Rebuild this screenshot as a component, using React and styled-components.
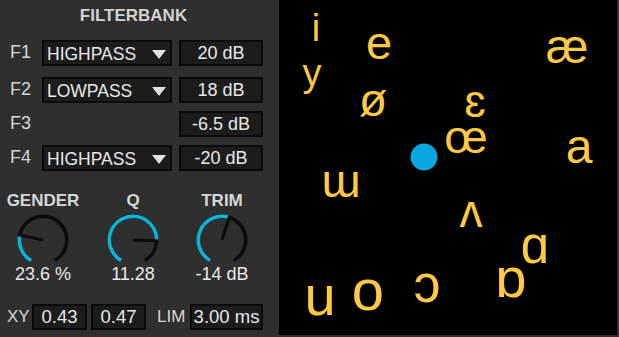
import styled, { createGlobalStyle } from "styled-components"

const GlobalStyle = createGlobalStyle`
  html, body {
    margin: 0;
    padding: 0;
    background: #2f2f2f;
  }
  body {
    font-family: "Liberation Sans", Arial, sans-serif;
  }
`

const filtros = [
    { nome: "F1", tipo: "HIGHPASS", ganho: "20 dB" },
    { nome: "F2", tipo: "LOWPASS", ganho: "18 dB" },
    { nome: "F3", tipo: null, ganho: "-6.5 dB" },
    { nome: "F4", tipo: "HIGHPASS", ganho: "-20 dB" },
]

const knobs = [
    { label: "GENDER", valor: 0.24, texto: "23.6 %" },
    { label: "Q", valor: 0.807, texto: "11.28" },
    { label: "TRIM", valor: 0.559, texto: "-14 dB" },
]

// x = centro horizontal, y = linha de base (coordenadas do pad)
const vogais = [
    { v: "i", x: 37, y: 41, s: 38 },
    { v: "e", x: 100, y: 59, s: 47 },
    { v: "æ", x: 288, y: 63, s: 48 },
    { v: "y", x: 33, y: 86, s: 38 },
    { v: "ø", x: 94, y: 116, s: 46 },
    { v: "ɛ", x: 196, y: 117, s: 47 },
    { v: "œ", x: 187, y: 153, s: 46 },
    { v: "a", x: 300, y: 163, s: 48 },
    { v: "ɯ", x: 62, y: 197, s: 47 },
    { v: "ʌ", x: 192, y: 227, s: 46 },
    { v: "ɑ", x: 256, y: 263, s: 51 },
    { v: "ɒ", x: 232, y: 297, s: 56 },
    { v: "ɔ", x: 148, y: 302, s: 54 },
    { v: "o", x: 89, y: 310, s: 58 },
    { v: "u", x: 41, y: 315, s: 56 },
]

function polar(cx, cy, r, ang) {
    const rad = (ang * Math.PI) / 180
    return [cx + r * Math.sin(rad), cy - r * Math.cos(rad)]
}

function arco(cx, cy, r, a0, a1) {
    const [x0, y0] = polar(cx, cy, r, a0)
    const [x1, y1] = polar(cx, cy, r, a1)
    const grande = a1 - a0 > 180 ? 1 : 0
    return `M ${x0} ${y0} A ${r} ${r} 0 ${grande} 1 ${x1} ${y1}`
}

function Knob({ label, valor, texto }) {
    const cx = 28
    const cy = 26
    const r = 23.7
    const fim = 210 + 300 * valor
    const [nx, ny] = polar(cx, cy, 25.5, fim)

    return (
        <KnobBox>
            <KnobLabel>{label}</KnobLabel>
            <Dial viewBox="0 0 56 50">
                <path d={arco(cx, cy, r, 210, 510)} stroke="#0c0c0c" strokeWidth="3.6" fill="none" />
                <path d={arco(cx, cy, r, 210, fim)} stroke="#0bb4d6" strokeWidth="3.6" fill="none" />
                <line x1={cx} y1={cy} x2={nx} y2={ny} stroke="#0c0c0c" strokeWidth="3.2" />
            </Dial>
            <KnobValue>{texto}</KnobValue>
        </KnobBox>
    )
}

export default function App() {
    return (
        <Window>
            <GlobalStyle />
            <Controls>
                <Title>FILTERBANK</Title>

                <FilterList>
                    {filtros.map(f => (
                        <FilterRow key={f.nome}>
                            <RowLabel>{f.nome}</RowLabel>
                            {f.tipo ? (
                                <Dropdown>
                                    <span>{f.tipo}</span>
                                    <Arrow />
                                </Dropdown>
                            ) : <span />}
                            <ValueBox>{f.ganho}</ValueBox>
                        </FilterRow>
                    ))}
                </FilterList>

                <KnobRow>
                    {knobs.map(k => <Knob key={k.label} {...k} />)}
                </KnobRow>

                <BottomRow>
                    <SmallLabel $w={25}>XY</SmallLabel>
                    <NumBox $w={55}>0.43</NumBox>
                    <NumBox $w={55} $ml={4}>0.47</NumBox>
                    <SmallLabel $w={33} $ml={11}>LIM</SmallLabel>
                    <NumBox $w={73}>3.00 ms</NumBox>
                </BottomRow>
            </Controls>

            <Pad>
                <svg width="338" height="335" viewBox="0 0 338 335">
                    {vogais.map(v => (
                        <Vowel key={v.v} x={v.x} y={v.y} fontSize={v.s} textAnchor="middle">{v.v}</Vowel>
                    ))}
                    <circle cx="145" cy="157" r="13.5" fill="#0aa6df" />
                </svg>
            </Pad>
        </Window>
    )
}

const Window = styled.div`
    width: 619px;
    height: 337px;

    display: flex;

    background: #2f2f2f;
`

const Controls = styled.div`
    width: 279px;
    box-sizing: border-box;
    padding: 6px 0 0 7px;

    display: flex;
    flex-direction: column;
`

const Title = styled.div`
    width: 253px;

    font-weight: 700;
    font-size: 17px;
    line-height: 20px;
    text-align: center;
    color: #d2d2d2;
`

const FilterList = styled.div`
    margin-top: 14px;

    display: flex;
    flex-direction: column;
    gap: 8px;
`

const FilterRow = styled.div`
    height: 26px;

    display: grid;
    grid-template-columns: 28px 130px 84px;
    column-gap: 7px;

    &:first-child {
        margin-bottom: 3px;
    }
`

const RowLabel = styled.div`
    padding-left: 3px;

    font-size: 18px;
    line-height: 24px;
    color: #d6d6d6;
`

const Caixa = styled.div`
    box-sizing: border-box;
    height: 26px;

    border: 2px solid #0a0a0a;
    background: #1c1c1c;

    font-size: 17.5px;
    color: #e8e8e8;
`

const Dropdown = styled(Caixa)`
    padding: 2px 4px 0 3px;

    display: flex;
    justify-content: space-between;
    align-items: center;
`

const Arrow = styled.div`
    width: 0;
    height: 0;

    border-left: 7px solid transparent;
    border-right: 7px solid transparent;
    border-top: 9px solid #e0e0e0;
`

const ValueBox = styled(Caixa)`
    font-size: 18px;
    line-height: 22px;
    text-align: center;
`

const KnobRow = styled.div`
    margin: 20px 0 0 -7px;

    display: grid;
    grid-template-columns: 86px 94px 84px;
`

const KnobBox = styled.div`
    display: flex;
    flex-direction: column;
    align-items: center;
`

const KnobLabel = styled.div`
    font-weight: 700;
    font-size: 17px;
    line-height: 20px;
    color: #d6d6d6;
`

const Dial = styled.svg`
    width: 56px;
    height: 50px;
    margin-top: 3px;
`

const KnobValue = styled.div`
    font-size: 18px;
    line-height: 20px;
    color: #e8e8e8;
`

const BottomRow = styled.div`
    margin-top: 20px;
    height: 26px;

    display: flex;
    align-items: center;
`

const SmallLabel = styled.div`
    width: ${props => props.$w}px;
    margin-left: ${props => props.$ml || 0}px;

    font-size: 17px;
    color: #d6d6d6;
`

const NumBox = styled(Caixa)`
    width: ${props => props.$w}px;
    margin-left: ${props => props.$ml || 0}px;

    font-size: 18.5px;
    line-height: 22px;
    text-align: center;
`

const Pad = styled.div`
    width: 338px;
    height: 335px;

    background: #000000;
`

const Vowel = styled.text`
    font-family: "Liberation Sans", "DejaVu Sans", sans-serif;
    fill: #ffc845;
`
